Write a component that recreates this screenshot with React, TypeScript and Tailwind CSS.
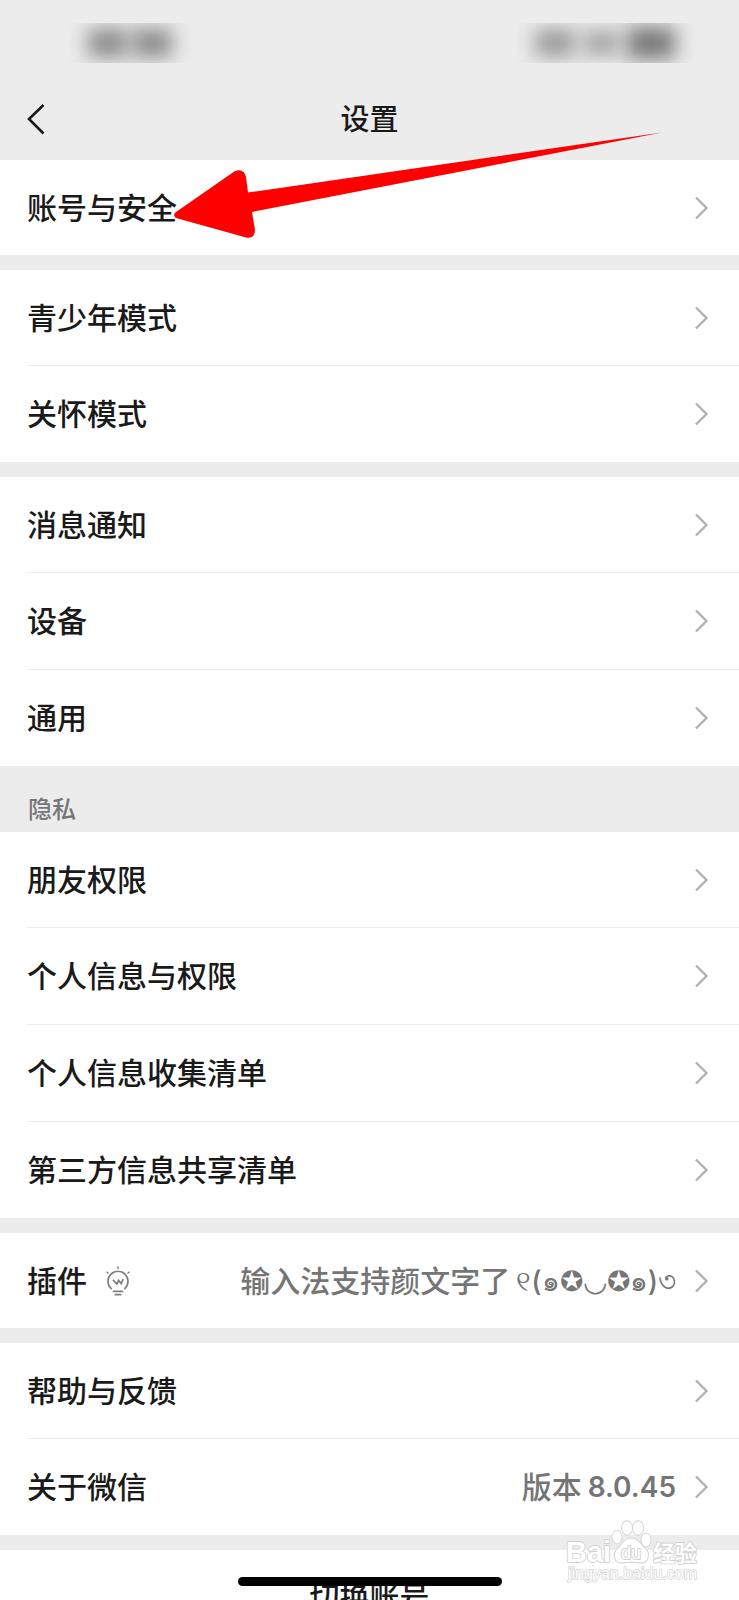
import type { ReactNode } from "react";

interface Item {
  label: string;
  icon?: ReactNode;
  value?: ReactNode;
}

interface Group {
  title?: string;
  items: Item[];
}

const groups: Group[] = [
  { items: [{ label: "账号与安全" }] },
  { items: [{ label: "青少年模式" }, { label: "关怀模式" }] },
  { items: [{ label: "消息通知" }, { label: "设备" }, { label: "通用" }] },
  {
    title: "隐私",
    items: [
      { label: "朋友权限" },
      { label: "个人信息与权限" },
      { label: "个人信息收集清单" },
      { label: "第三方信息共享清单" },
    ],
  },
  {
    items: [
      {
        label: "插件",
        icon: <BulbIcon />,
        value: (
          <>
            输入法支持颜文字了
            <span className="text-[28px]">୧(๑✪◡✪๑)৩</span>
          </>
        ),
      },
    ],
  },
  {
    items: [
      { label: "帮助与反馈" },
      {
        label: "关于微信",
        value: (
          <>
            版本
            <span className="text-[28px] font-semibold">8.0.45</span>
          </>
        ),
      },
    ],
  },
];

export default function App() {
  return (
    <div className="relative h-screen overflow-hidden bg-[#ececec] font-['Inter','Noto_Sans_CJK_SC',sans-serif] text-[#1a1a1a]">
      <StatusBar />

      <header className="grid h-20 grid-cols-[1fr_auto_1fr] items-center px-[27px]">
        <button type="button" aria-label="返回" className="justify-self-start">
          <svg width="18" height="32" viewBox="0 0 18 32" fill="none" stroke="#1a1a1a" strokeWidth="2.6">
            <path d="M16.5 1 2 15l14.5 14.5" />
          </svg>
        </button>
        <h1 className="text-[29px] leading-10 font-medium">设置</h1>
      </header>

      <main className="flex flex-col">
        {groups.map((group, i) => (
          <section key={i}>
            {group.title ? (
              <h2 className="flex h-[66px] items-end px-7 pb-1 text-2xl leading-9 font-medium text-[#767676]">
                {group.title}
              </h2>
            ) : (
              i > 0 && <div className="h-[15px]" />
            )}
            <ul className="bg-white">
              {group.items.map((item, n) => (
                <Row key={item.label} item={item} divided={n > 0} />
              ))}
            </ul>
          </section>
        ))}

        <button type="button" className="mt-[15px] h-[95px] bg-white text-[30px] font-medium">
          切换账号
        </button>
      </main>

      <PointerArrow />
      <Watermark />

      {/* Home indicator */}
      <div className="absolute bottom-3.5 left-1/2 h-[9px] w-[264px] -translate-x-1/2 rounded-full bg-black" />
    </div>
  );
}

// ---------- helpers ----------

function StatusBar() {
  return (
    <div className="flex h-20 items-center justify-between px-10 pt-1.5">
      <div className="flex h-10 items-center gap-1 overflow-hidden px-12">
        <span className="h-7 w-10 bg-[#888888] blur-[10px]" />
        <span className="h-7 w-10 bg-[#888888] blur-[10px]" />
      </div>
      <div className="flex h-10 items-center gap-2 overflow-hidden px-6">
        <span className="h-7 w-10 bg-[#999999] blur-[10px]" />
        <span className="h-6 w-9 bg-[#a0a0a0] blur-[10px]" />
        <span className="h-8 w-12 bg-[#777777] blur-[10px]" />
      </div>
    </div>
  );
}

function Row({ item, divided }: { item: Item; divided: boolean }) {
  return (
    <li className="pl-[27px]">
      <button
        type="button"
        className={`flex w-full items-center pr-[30px] text-left text-[30px] leading-10 font-medium ${
          divided ? "h-[97px] border-t border-[#ececec]" : "h-[95px]"
        }`}
      >
        <span>{item.label}</span>
        {item.icon && <span className="ml-[18px]">{item.icon}</span>}
        {item.value && (
          <span className="ml-auto flex gap-1.5 whitespace-nowrap text-[#757575]">{item.value}</span>
        )}
        <svg
          className={item.value ? "ml-[18px]" : "ml-auto"}
          width="15"
          height="24"
          viewBox="0 0 15 24"
          fill="none"
          stroke="#b2b2b2"
          strokeWidth="2.4"
        >
          <path d="M2 1.5 12.5 12 2 22.5" />
        </svg>
      </button>
    </li>
  );
}

function BulbIcon() {
  return (
    <svg width="26" height="30" viewBox="0 0 26 30" fill="none" stroke="#808080" strokeWidth="1.7" strokeLinecap="round">
      <path d="M13 1v1.6M2 6.2l1 .8M24 6.2l-1 .8" strokeWidth="1.5" />
      <path d="M6.2 22.6a10 10 0 1 1 13.6 0" />
      <path d="M8.4 14.4l3.4 3.6 1.8-3.6 2.6 3.2 1.8-4" />
      <path d="M8.4 25.4h9.2M10.2 28.6h5.6" />
    </svg>
  );
}

function PointerArrow() {
  return (
    <svg className="pointer-events-none absolute top-0 left-0" width="680" height="250" viewBox="0 0 680 250" fill="#ff0000">
      <path d="M662 132.5 248 192.5 246 177Q244 168 235 171L176 212Q172 215 176 218L246 237.5Q255 239 255 230L252 212Z" />
    </svg>
  );
}

function Watermark() {
  return (
    <svg
      className="pointer-events-none absolute right-9 bottom-3"
      width="140"
      height="70"
      viewBox="0 0 140 70"
      fill="#ffffff"
      stroke="#d2d2d2"
      strokeWidth="1.8"
      strokeLinejoin="round"
      paintOrder="stroke"
      fontFamily="'Liberation Sans', 'Noto Sans CJK SC', sans-serif"
    >
      <text x="3" y="44" fontSize="29" fontWeight="700">Bai</text>
      <ellipse cx="54" cy="19" rx="4.6" ry="6.4" />
      <ellipse cx="64" cy="10" rx="5" ry="6.8" />
      <ellipse cx="75" cy="10" rx="5" ry="6.8" />
      <ellipse cx="83" cy="22" rx="4.6" ry="6.4" />
      <path d="M68 20.5c-7 0-8 6-13 10-5 4-4 14 3 14 4 0 6-1 10-1s6 1 10 1c8 0 9-10 4-14-5-4-7-10-14-10Z" />
      <text x="58" y="41" fontSize="18">du</text>
      <text x="90" y="43" fontSize="22" fontWeight="700">经验</text>
      <text x="5" y="61" fontSize="16" strokeWidth="1.4">jingyan.baidu.com</text>
    </svg>
  );
}
